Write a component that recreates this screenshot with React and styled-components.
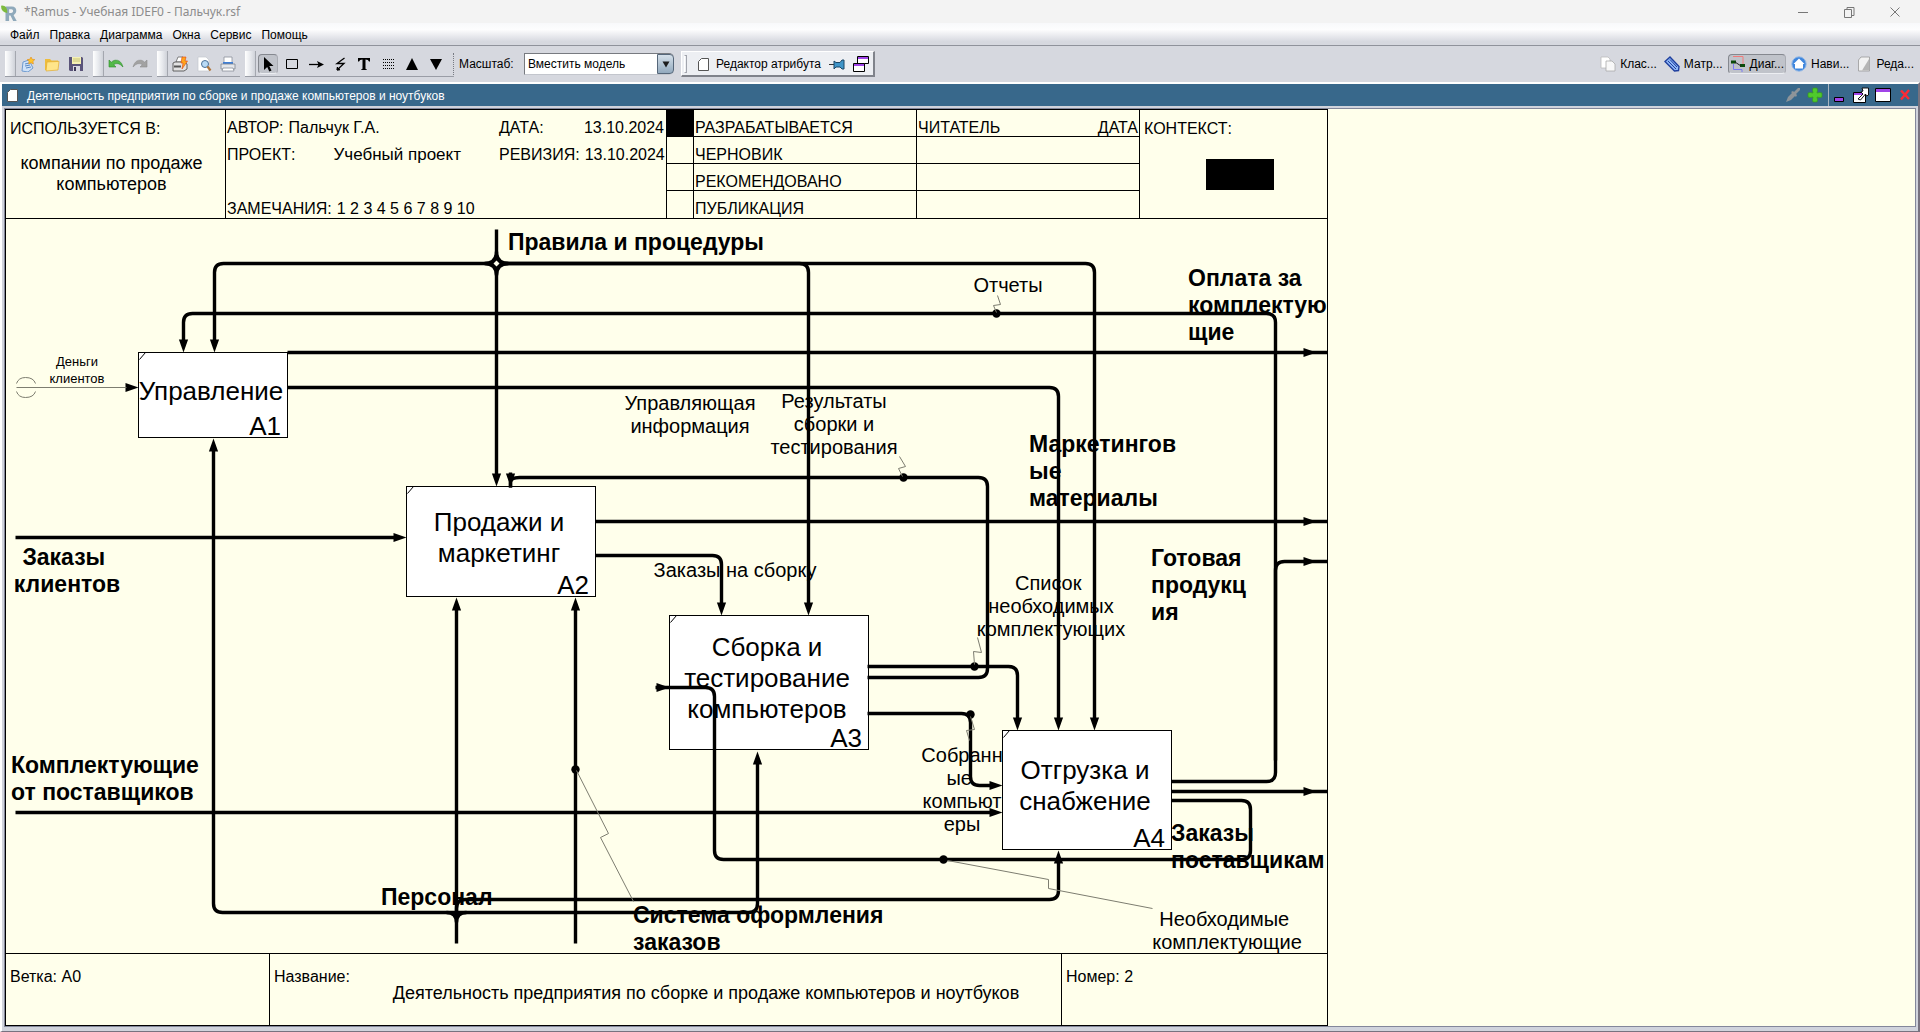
import React from "react";
import styled, { createGlobalStyle, css } from "styled-components";

const sans = '"Liberation Sans", Arial, sans-serif';

const GlobalStyle = createGlobalStyle`
  * { box-sizing: border-box; }
  body { margin: 0; background: #d6d8df; font-family: ${sans}; font-size: 12px; color: #000; }
  button { font: inherit; color: inherit; }
`;

/* ---------- window chrome ---------- */

const Window = styled.div`
  display: flex;
  flex-direction: column;
  height: 100vh;
  min-height: 600px;
  overflow: hidden;
`;

const TitleBar = styled.header`
  display: flex;
  align-items: center;
  height: 23px;
  padding: 0 2px 0 1px;
  background: #f3f3f3;
  color: #8c8c8c;
  flex: none;
`;

const WindowTitle = styled.h1`
  flex: 1;
  margin: 0 0 0 5px;
  font: 400 12px/16px "Noto Sans", "Open Sans", sans-serif;
`;

const CaptionButtons = styled.div`
  display: flex;
`;

const CaptionButton = styled.button`
  display: flex;
  align-items: center;
  justify-content: center;
  width: 46px;
  height: 20px;
  padding: 0;
  border: 0;
  background: none;
`;

const MenuBar = styled.nav`
  display: flex;
  align-items: center;
  gap: 10px;
  height: 23px;
  padding: 2px 0 0 10px;
  background: linear-gradient(#f8f9fb, #fdfdfe 30%, #d6d8df 85%);
  border-bottom: 1px solid #8f929b;
  flex: none;
`;

const MenuItem = styled.button`
  padding: 0;
  border: 0;
  background: none;
  line-height: 16px;
`;

const ToolBar = styled.div`
  display: flex;
  align-items: center;
  height: 36px;
  padding: 0 4px 0 5px;
  gap: 5px;
  background: #d6d8df;
  flex: none;
`;

const ToolGroup = styled.div`
  display: flex;
  align-items: center;
  height: 26px;
  border-bottom: 1px solid #9a9da6;
`;

const Grip = styled.span`
  width: 11px;
  height: 25px;
  border-right: 1px solid #a4a7af;
  background: linear-gradient(90deg, #fff, #e9ebef 50%, #cfd2d9);
`;

const ToolButton = styled.button`
  display: flex;
  align-items: center;
  justify-content: center;
  width: ${(p) => (p.$active ? 20 : 24)}px;
  height: 20px;
  margin: ${(p) => (p.$active ? "0 2px" : 0)};
  padding: 0;
  border: 1px solid transparent;
  border-radius: 4px;
  background: none;
  ${(p) =>
    p.$active &&
    css`
      border-color: #85888f #a9acb3 #eceef2 #85888f;
      background: #c0c3ca;
    `}
`;

const DottedRule = styled.span`
  height: 22px;
  margin-left: 5px;
  border-left: 1px dotted #777a82;
`;

const ScaleLabel = styled.label`
  width: 60px;
  line-height: 16px;
`;

const ComboBox = styled.span`
  display: flex;
  width: 150px;
  height: 22px;
  border: 1px solid #777a80;
  border-right: 0;
  border-bottom-color: #c3c6cd;
  border-radius: 0 5px 5px 0;
  background: #fff;
`;

const Select = styled.select`
  flex: 1;
  min-width: 0;
  padding: 0 0 0 3px;
  border: 0;
  appearance: none;
  background: transparent;
  font: 12px ${sans};
`;

const ComboArrow = styled.span`
  display: flex;
  align-items: center;
  justify-content: center;
  width: 17px;
  border: 1px solid #56677a;
  border-radius: 0 4px 4px 0;
  background: linear-gradient(#d5e0ea, #93aabe);
`;

const EditorPanel = styled.div`
  display: flex;
  align-items: center;
  gap: 8px;
  width: 194px;
  height: 26px;
  margin-left: 2px;
  padding-left: 2px;
  border: 1px solid #fff;
  border-right: 2px solid #80838b;
  border-bottom: 2px solid #80838b;
  background: #edeff3;
`;

const PanelGrip = styled.span`
  width: 3px;
  height: 18px;
  border: 1px solid #a2a5ad;
  border-left-color: #fff;
`;

const PlainButton = styled.button`
  display: flex;
  align-items: center;
  gap: 5px;
  padding: 0;
  border: 0;
  background: none;
  line-height: 16px;
  white-space: nowrap;
`;

const ViewTabs = styled.div`
  display: flex;
  align-items: center;
  align-self: stretch;
  gap: 3px;
  margin-left: auto;
`;

const ViewTab = styled(ToolButton)`
  width: auto;
  margin: 0;
  gap: 4px;
  padding: 0 1px;
`;

/* ---------- document frame ---------- */

const Frame = styled.main`
  display: flex;
  flex-direction: column;
  flex: 1;
  min-height: 0;
  border: 2px solid #fff;
  border-right-color: #77727f;
  border-bottom: 1px solid #77727f;
  background: #d0d3dc;
`;

const FrameTitle = styled.div`
  display: flex;
  align-items: center;
  gap: 2px;
  height: 22px;
  padding: 0 5px 0 2px;
  background: #38688b;
  color: #fff;
  flex: none;
`;

const FrameName = styled.h2`
  flex: 1;
  margin: 0 0 0 5px;
  padding-top: 1px;
  font: 400 12px/16px ${sans};
`;

const FrameTools = styled.div`
  display: flex;
  align-items: center;
  align-self: stretch;
  gap: 6px;
  padding-right: ${(p) => (p.$divided ? 5 : 0)}px;
  border-right: ${(p) => (p.$divided ? "1px solid #a8b4c0" : 0)};
`;

const FrameButton = styled.button`
  display: flex;
  padding: 0;
  border: 0;
  background: none;
`;

const Workspace = styled.section`
  flex: 1;
  min-height: 0;
  margin: 2px 2px 4px 2px;
  border: 1px solid #83879a;
  overflow: hidden;
  background: #ffffeb;
`;

const Sheet = styled.article`
  width: 1323px;
  border: 1px solid #000;
`;

const SheetHead = styled.div`
  display: grid;
  grid-template-columns: 220px 441px 27px 223px 223px 1fr;
  font-size: 16px;
  line-height: 18px;
  border-bottom: 1px solid #000;
`;

const HeadCell = styled.div`
  display: flex;
  flex-direction: column;
  padding: 10px 4px 0 4px;
  border-right: ${(p) => (p.$last ? 0 : "1px solid #000")};
`;

const UsedBy = styled.div`
  margin: 15px 8px 0 0;
  font-size: 18px;
  line-height: 21px;
  text-align: center;
  white-space: pre-line;
`;

const InfoGrid = styled.dl`
  display: grid;
  grid-template-columns: 272px 86px 1fr;
  grid-template-rows: repeat(4, 27px);
  align-items: end;
  margin: 0;
  padding: 0 2px 0 1px;
  border-right: 1px solid #000;
`;

const InfoField = styled.div`
  display: flex;
  grid-column: ${(p) => p.$span || "auto"};
  grid-row: ${(p) => p.$row};
  gap: ${(p) => p.$gap || 5}px;
  justify-content: ${(p) => (p.$spread ? "space-between" : "flex-start")};
  white-space: nowrap;
  dt, dd { margin: 0; }
`;

const ProjectName = styled.dd`
  font-size: 17px;
`;

const StatusColumn = styled.div`
  display: grid;
  grid-template-rows: repeat(4, 27px);
  line-height: 16px;
  border-right: 1px solid #000;
`;

const StatusCell = styled.div`
  display: flex;
  align-items: flex-end;
  justify-content: space-between;
  padding: 0 1px;
  border-bottom: 1px solid ${(p) => (p.$last ? "transparent" : "#000")};
  background: ${(p) => (p.$filled ? "#000" : "none")};
`;

const ContextBox = styled.div`
  width: 68px;
  height: 31px;
  margin: 21px 0 0 62px;
  background: #000;
`;

const Canvas = styled.div`
  position: relative;
  height: 734px;
`;

const ORIGIN = { x: 6, y: 219 };

const placed = css`
  position: absolute;
  left: ${(p) => p.$x - ORIGIN.x}px;
  top: ${(p) => p.$y - ORIGIN.y}px;
  width: ${(p) => p.$w}px;
`;

const ActivityBox = styled.div`
  ${placed}
  display: flex;
  align-items: center;
  justify-content: center;
  height: ${(p) => p.$h}px;
  padding: 0 4px 8px 0;
  border: 1px solid #000;
  background: #fff;
  font-size: 26px;
  line-height: 31px;
  text-align: center;
  white-space: pre;
`;

const ActivityCode = styled.span`
  position: absolute;
  right: 6px;
  bottom: -5px;
`;

const Wires = styled.svg`
  position: absolute;
  left: 0;
  top: 0;
  width: 100%;
  height: 100%;
`;

const labelKinds = {
  outer: css`font-size: 23px; line-height: 27px; font-weight: 700;`,
  inner: css`font-size: 20px; line-height: 23px;`,
  small: css`font-size: 13px; line-height: 17px;`,
};

const ArrowLabel = styled.div`
  ${placed}
  ${(p) => labelKinds[p.$kind]}
  text-align: ${(p) => (p.$center ? "center" : "left")};
  white-space: pre;
`;

const SheetFoot = styled.div`
  display: grid;
  grid-template-columns: 264px 792px 1fr;
  height: 72px;
  border-top: 1px solid #000;
  font-size: 16px;
  line-height: 18px;
`;

const FootCell = styled.div`
  display: flex;
  gap: 5px;
  padding: 14px 4px 0 4px;
  border-right: ${(p) => (p.$last ? 0 : "1px solid #000")};
`;

const SheetName = styled.div`
  flex: 1;
  padding-top: 16px;
  font-size: 18px;
  text-align: center;
`;

/* ---------- diagram data ---------- */

const boxes = [
  { x: 138, y: 352, w: 150, h: 86, code: "A1", text: "Управление" },
  { x: 406, y: 486, w: 190, h: 111, code: "A2", text: "Продажи и\nмаркетинг" },
  { x: 669, y: 615, w: 200, h: 135, code: "A3", text: "Сборка и\nтестирование\nкомпьютеров" },
  { x: 1002, y: 730, w: 170, h: 120, code: "A4", text: "Отгрузка и\nснабжение" },
];

const wires = [
  [[496, 229], [496, 478]],
  [[496, 263], [214, 263], [214, 343]],
  [[496, 263], [808, 263], [808, 606]],
  [[496, 263], [1094, 263], [1094, 720]],
  [[1171, 781], [1275, 781], [1275, 313], [183, 313], [183, 343]],
  [[287, 352], [1327, 352]],
  [[287, 387], [1058, 387], [1058, 720]],
  [[456, 912], [213, 912], [213, 446]],
  [[456, 912], [757, 912], [757, 760]],
  [[456, 943], [456, 605]],
  [[456, 918], [456, 899], [1058, 899], [1058, 860]],
  [[575, 943], [575, 605]],
  [[15, 537], [398, 537]],
  [[15, 812], [993, 812]],
  [[595, 521], [1327, 521]],
  [[595, 555], [721, 555], [721, 606]],
  [[867, 677], [987, 677], [987, 477], [510, 477], [510, 487]],
  [[867, 666], [1017, 666], [1017, 720]],
  [[867, 713], [970, 713], [970, 785], [993, 785]],
  [[1171, 791], [1327, 791]],
  [[1171, 800], [1250, 800], [1250, 859], [714, 859], [714, 687], [655, 687]],
  [[1275, 760], [1275, 561], [1327, 561]],
  [[510, 472], [510, 487]],
];

const arrows = [
  [496, 486, "d"], [214, 352, "d"], [183, 352, "d"], [808, 615, "d"], [1094, 730, "d"],
  [1058, 730, "d"], [721, 615, "d"], [1017, 730, "d"], [510, 486, "d"],
  [213, 438, "u"], [456, 597, "u"], [575, 597, "u"], [757, 751, "u"], [1058, 850, "u"],
  [138, 387, "r"], [406, 537, "r"], [1002, 785, "r"], [1002, 812, "r"], [669, 687, "r"],
  [1316, 352, "r"], [1316, 521, "r"], [1316, 561, "r"], [1316, 791, "r"],
];

const dots = [[996, 313], [903, 477], [974, 666], [970, 714], [943, 859], [575, 769]];

const leaders = [
  "997,295 1000,304 993,305 996,312",
  "899,456 905,466 898,468 902,476",
  "977,637 981,652 973,651 974,664",
  "970,716 974,729 966,730 969,740",
  "576,770 608,833 600,837 633,901",
  "947,860 1048,879 1048,888 1152,908",
];

const labels = [
  { x: 508, y: 229, w: 270, kind: "outer", text: "Правила и процедуры" },
  { x: 1188, y: 265, w: 140, kind: "outer", text: "Оплата за\nкомплектую\nщие" },
  { x: 1029, y: 431, w: 160, kind: "outer", text: "Маркетингов\nые\nматериалы" },
  { x: 1151, y: 545, w: 120, kind: "outer", text: "Готовая\nпродукц\nия" },
  { x: 12, y: 544, w: 110, kind: "outer", center: true, text: "Заказы \nклиентов" },
  { x: 11, y: 752, w: 200, kind: "outer", text: "Комплектующие\nот поставщиков" },
  { x: 381, y: 884, w: 130, kind: "outer", text: "Персонал" },
  { x: 633, y: 902, w: 270, kind: "outer", text: "Система оформления\nзаказов" },
  { x: 1171, y: 820, w: 157, kind: "outer", text: "Заказы\nпоставщикам" },
  { x: 968, y: 274, w: 80, kind: "inner", center: true, text: "Отчеты" },
  { x: 619, y: 392, w: 142, kind: "inner", center: true, text: "Управляющая\nинформация" },
  { x: 763, y: 390, w: 142, kind: "inner", center: true, text: "Результаты\nсборки и\nтестирования" },
  { x: 650, y: 559, w: 170, kind: "inner", center: true, text: "Заказы на сборку" },
  { x: 971, y: 572, w: 160, kind: "inner", center: true, text: "Список \nнеобходимых\nкомплектующих" },
  { x: 916, y: 744, w: 92, kind: "inner", center: true, text: "Собранн\nые \nкомпьют\nеры" },
  { x: 1147, y: 908, w: 160, kind: "inner", center: true, text: "Необходимые \nкомплектующие" },
  { x: 41, y: 353, w: 72, kind: "small", center: true, text: "Деньги\nклиентов" },
];

/* Turns a list of corner points into a path whose corners are rounded. */
function route(points, radius = 9) {
  const toward = (from, to, d) => {
    const dx = to[0] - from[0];
    const dy = to[1] - from[1];
    const len = Math.hypot(dx, dy) || 1;
    const k = Math.min(d, len / 2) / len;
    return [from[0] + dx * k, from[1] + dy * k];
  };
  return points
    .map((p, i) => {
      if (i === 0) return `M${p}`;
      if (i === points.length - 1) return `L${p}`;
      return `L${toward(p, points[i - 1], radius)}Q${p} ${toward(p, points[i + 1], radius)}`;
    })
    .join("");
}

const turn = { r: 0, d: 90, u: 270 };

function Diagram() {
  return (
    <Canvas>
      {boxes.map((b) => (
        <ActivityBox key={b.code} $x={b.x} $y={b.y} $w={b.w} $h={b.h}>
          {b.text}
          <ActivityCode>{b.code}</ActivityCode>
        </ActivityBox>
      ))}
      <Wires viewBox="6 219 1321 734" preserveAspectRatio="xMinYMin meet" aria-hidden="true">
        <g transform="translate(0.5 0.5)">
          <g fill="none" stroke="#000" strokeWidth="3.4">
            {wires.map((w, i) => <path key={i} d={route(w)} />)}
            <path d="M446 912Q456 912 456 922Q456 912 466 912" />
            <path d="M484 263Q496 263 496 275Q496 263 508 263Q496 263 496 251Q496 263 484 263" />
          </g>
          <path d="M496 258l5 5-5 5-5-5z" fill="#000" />
          <path d="M496 260l3 3-3 3-3-3z" fill="#ffffeb" />
          {arrows.map(([x, y, dir]) => (
            <path key={`${x}-${y}`} d="M0 0L-13-4.6V4.6Z" transform={`translate(${x} ${y}) rotate(${turn[dir]})`} />
          ))}
          {dots.map(([x, y]) => <circle key={x} cx={x} cy={y} r="4.2" />)}
          <g fill="none" stroke="#7d7d70" strokeWidth="1">
            {leaders.map((l) => <polyline key={l} points={l} />)}
            <path d="M16 387H126M16 383Q18 377 25 377Q33 377 35 383M16 391Q18 397 25 397Q33 397 35 391" />
          </g>
          <g stroke="#000">
            {boxes.map((b) => <path key={b.code} d={`M${b.x + 1} ${b.y + 7}l6-7`} />)}
          </g>
        </g>
      </Wires>
      {labels.map((l) => (
        <ArrowLabel key={l.text} $x={l.x} $y={l.y} $w={l.w} $kind={l.kind} $center={l.center}>
          {l.text}
        </ArrowLabel>
      ))}
    </Canvas>
  );
}

/* ---------- icons ---------- */

const glyphs = {
  logo: (
    <>
      <path d="M5 4h7q5 0 5 5 0 3-3 4.500l3.500 6.500h-4l-3-6h-1.500v6H5z" fill="#8fa9bb" />
      <path d="M9 7h2.500q2 0 2 2t-2 2H9z" fill="#f3f3f3" />
      <path d="M0 3q7-1 7 8Q0 10 0 3z" fill="#7cba3d" />
    </>
  ),
  newDoc: (
    <>
      <path d="M3 6l6-2 4 8-5 4-6-1z" fill="#cfe2f8" stroke="#6f9bd0" />
      <path d="M5 8l4-1M5 10l5-1M6 12l5-1" stroke="#5b8ac4" />
      <path d="M11 1l1.200 2.300 2.600.3-1.900 1.800.5 2.500L11 6.700 8.700 7.900l.4-2.500-1.900-1.800 2.600-.3z" fill="#ffc52b" stroke="#e08a1a" strokeWidth=".6" />
    </>
  ),
  folder: (
    <>
      <path d="M1 3h5l1.500 1.500H14V14H1z" fill="#eebd3c" />
      <path d="M3 6l12-.6-1 8.600-12 1z" fill="#ffe58a" stroke="#e2ad30" strokeWidth=".7" />
    </>
  ),
  save: (
    <>
      <path d="M1 1h13l1 1v13H2l-1-1z" fill="#5a5479" />
      <path d="M4 1h9v7H4z" fill="#f5f1b4" />
      <path d="M5 3h7M5 5h7" stroke="#c8c276" />
      <path d="M5 10h7v5H5z" fill="#d8d8e2" />
      <path d="M6 11h2v4H6z" fill="#3d3858" />
    </>
  ),
  undo: <path d="M1 4v7h7L5.600 8.700Q10 5.500 15 11 13 3.500 7 4.200 5 4.500 3.300 6.200z" fill="#52b947" stroke="#2d8a2a" strokeWidth=".6" />,
  redo: <path d="M15 4v7H8l2.400-2.300Q6 5.500 1 11 3 3.500 9 4.200q2 .3 3.700 2z" fill="#a2a2a2" stroke="#8d8d8d" strokeWidth=".6" />,
  quickPrint: (
    <>
      <path d="M4 6l2-5h5l-1 5z" fill="#fff" stroke="#666" strokeWidth=".8" />
      <path d="M1 7l2-1h9l3 2v5l-3 2H1z" fill="#e2e2e2" stroke="#555" strokeWidth=".9" />
      <path d="M2 9.500h7v2H2z" fill="#555" />
      <path d="M10 1h4l-1 4h2.500L10 13l1-6H9z" fill="#ffa61c" stroke="#e04413" strokeWidth=".6" />
    </>
  ),
  preview: (
    <>
      <path d="M2 1h8l3 3v11H2z" fill="#fff" stroke="#c4c8ce" strokeWidth=".7" />
      <circle cx="9" cy="8" r="3.500" fill="#b9daf5" stroke="#4a6f96" />
      <path d="M11.500 10.500l3 4" stroke="#b0753a" strokeWidth="2.200" />
    </>
  ),
  print: (
    <>
      <path d="M4 1h8v6H4z" fill="#fff" stroke="#8a9099" strokeWidth=".8" />
      <path d="M3 6h10v3H3z" fill="#3f7fd6" />
      <path d="M1 8h14v5H1z" fill="#e4e6ea" stroke="#7f858f" strokeWidth=".8" />
      <path d="M3 12h10l1 3H2z" fill="#fff" stroke="#8a9099" strokeWidth=".8" />
    </>
  ),
  pointer: <path d="M4 1l9.500 9H9.300l2.200 4.500-2.200 1L7.200 11 4 14z" fill="#000" />,
  box: <path d="M2.500 3.500h11v9h-11z" fill="none" stroke="#000" />,
  arrow: (
    <>
      <path d="M1 8.500h12" stroke="#000" strokeWidth="1.300" />
      <path d="M16 8.500L9 5l1.500 3.500L9 12z" fill="#000" />
    </>
  ),
  bolt: <path d="M12.500 2L5 7.500h7L5 14M5 14l.5-3M5 14l3-.5" fill="none" stroke="#000" strokeWidth="1.300" />,
  text: <path d="M2 2h12v3.500h-1Q12.500 3.500 9.500 3.500v9q0 1 1.500 1V14H5v-.5q1.500 0 1.500-1v-9Q3.500 3.500 3 5.500H2z" fill="#000" />,
  dots: <path d="M3 3.500h11M3 6.500h11M3 9.500h11M3 12.500h11" stroke="#000" strokeDasharray="1 1" shapeRendering="crispEdges" />,
  up: <path d="M8 2l6 12H2z" fill="#000" />,
  down: <path d="M8 14L2 3h12z" fill="#000" />,
  page: <path d="M6.500 2.500h7v12h-10v-9z" fill="#fff" stroke="#555" />,
  pin: (
    <>
      <path d="M0 8.500h6" stroke="#333" />
      <path d="M5 5l2 1.500h4L13 4h2v9h-2l-2-2H7L5 13z" fill="#3f95c9" stroke="#1b4666" />
    </>
  ),
  windows: (
    <>
      <path d="M4.500 .5h11v7h-11z" fill="#fff" stroke="#000" />
      <path d="M5 1h10v2H5z" fill="#a044e8" />
      <path d="M.5 7.500h11v8H.5z" fill="#fff" stroke="#000" />
      <path d="M1 8h10v2H1z" fill="#a044e8" />
    </>
  ),
  copies: (
    <>
      <path d="M1 1h7l2 2v9H1z" fill="#fff" stroke="#bbb" strokeWidth=".8" />
      <path d="M6 5h6l3 3v7H6z" fill="#f8f8f8" stroke="#aaa" strokeWidth=".8" />
    </>
  ),
  clip: (
    <>
      <path d="M1 5.500L6 1l9 9.500-.5 4-4 .5z" fill="#8db4f4" stroke="#1f3f9e" strokeWidth="1.400" />
      <path d="M4 5l8 8M6 3.500l7 7.500" stroke="#1f3f9e" />
    </>
  ),
  flow: (
    <>
      <path d="M3 .5h10V8" fill="none" stroke="#f27b7b" />
      <path d="M3.500 8v5.500H12V16" fill="none" stroke="#7b7bf2" />
      <path d="M1 6h5M10 9.500h5" stroke="#0a4a0a" strokeWidth="3" />
      <path d="M5 6l6 4" stroke="#222" />
    </>
  ),
  compass: (
    <>
      <circle cx="8" cy="8" r="7.200" fill="#3f86dd" stroke="#94b9e6" />
      <path d="M8 2.500l5.500 5.500h-1.500v4.500H4V8H2.500z" fill="#fff" />
    </>
  ),
  greyPage: (
    <>
      <path d="M5 1h8.500v14h-11V4z" fill="#f2f2f2" stroke="#999" strokeWidth=".8" />
      <path d="M13 3v11.500H6z" fill="#b5b5b5" />
    </>
  ),
  dropper: <path d="M1 15l2-5 4-4-1-1 2-1 1 1 4-4h2v2l-4 4 1 1-1 2-1-1-4 4z" fill="#8d9499" />,
  plus: <path d="M6 1h4q1 2 0 5 3-1 5 0v4q-2 1-5 0 1 3 0 5H6q-1-2 0-5-3 1-5 0V6q2-1 5 0-1-3 0-5z" fill="#4fc92c" stroke="#37961f" strokeWidth=".7" />,
  minimize: <path d="M3.500 10.500h9v4h-9z" fill="#a044e8" stroke="#000" />,
  detach: (
    <>
      <path d="M.5 5.500h12v10H.5z" fill="#fff" stroke="#000" />
      <path d="M1 6h11v2H1z" fill="#a044e8" />
      <path d="M5 12l5-5-2-2 2-1-1-3h6.500v7l-2 1-1-2-5 6z" fill="#fff" stroke="#000" strokeWidth=".9" />
    </>
  ),
  maximize: (
    <>
      <path d="M.5 1.500h15v13H.5z" fill="#fff" stroke="#000" />
      <path d="M1 2h14v3H1z" fill="#a044e8" />
    </>
  ),
  close: <path d="M4 3.500l8 8.500M12 3L4 12.500" stroke="#ff2a34" strokeWidth="2.400" />,
  capMin: <path d="M3 8.500h10" stroke="#777" />,
  capRestore: <path d="M3.500 5.500h7v8h-7zM6 5.500V3.500h7v8h-2.500" fill="none" stroke="#777" />,
  capClose: <path d="M3.500 3.500l9 9M12.500 3.500l-9 9" stroke="#777" />,
  caret: <path d="M4 5h8l-4 7z" fill="#1d1d1d" />,
};

const Glyph = styled.svg`
  display: block;
  flex: none;
  width: ${(p) => p.$size}px;
  height: ${(p) => p.$size}px;
`;

function Icon({ name, size = 16 }) {
  const box = name === "logo" ? 20 : 16;
  return (
    <Glyph $size={size} viewBox={`0 0 ${box} ${box}`} fill="none" aria-hidden="true">
      {glyphs[name]}
    </Glyph>
  );
}

const toolGroups = [
  [["newDoc", "Создать"], ["folder", "Открыть"], ["save", "Сохранить"]],
  [["undo", "Отменить"], ["redo", "Повторить"]],
  [["quickPrint", "Быстрая печать"], ["preview", "Просмотр"], ["print", "Печать"]],
];

const drawTools = [
  ["pointer", "Курсор"], ["box", "Блок"], ["arrow", "Стрелка"], ["bolt", "Тильда"],
  ["text", "Текст"], ["dots", "Сетка"], ["up", "Вверх"], ["down", "Вниз"],
];

const views = [
  ["copies", "Клас..."], ["clip", "Матр..."], ["flow", "Диаг..."], ["compass", "Нави..."], ["greyPage", "Реда..."],
];

const statuses = ["РАЗРАБАТЫВАЕТСЯ", "ЧЕРНОВИК", "РЕКОМЕНДОВАНО", "ПУБЛИКАЦИЯ"];

const diagramName = "Деятельность предприятия по сборке и продаже компьютеров и ноутбуков";

export default function App() {
  return (
    <Window>
      <GlobalStyle />
      <TitleBar>
        <Icon name="logo" size={18} />
        <WindowTitle>*Ramus - Учебная IDEF0 - Пальчук.rsf</WindowTitle>
        <CaptionButtons>
          <CaptionButton aria-label="Свернуть"><Icon name="capMin" /></CaptionButton>
          <CaptionButton aria-label="Восстановить"><Icon name="capRestore" /></CaptionButton>
          <CaptionButton aria-label="Закрыть"><Icon name="capClose" /></CaptionButton>
        </CaptionButtons>
      </TitleBar>

      <MenuBar>
        {["Файл", "Правка", "Диаграмма", "Окна", "Сервис", "Помощь"].map((m) => (
          <MenuItem key={m}>{m}</MenuItem>
        ))}
      </MenuBar>

      <ToolBar>
        {toolGroups.map((group, i) => (
          <ToolGroup key={i}>
            <Grip />
            {group.map(([icon, name]) => (
              <ToolButton key={icon} aria-label={name}><Icon name={icon} /></ToolButton>
            ))}
          </ToolGroup>
        ))}
        <ToolGroup>
          <Grip />
          {drawTools.map(([icon, name]) => (
            <ToolButton key={icon} aria-label={name} $active={icon === "pointer"}><Icon name={icon} /></ToolButton>
          ))}
          <DottedRule />
        </ToolGroup>
        <ScaleLabel htmlFor="scale">Масштаб:</ScaleLabel>
        <ComboBox>
          <Select id="scale" defaultValue="fit">
            <option value="fit">Вместить модель</option>
          </Select>
          <ComboArrow><Icon name="caret" size={14} /></ComboArrow>
        </ComboBox>
        <EditorPanel>
          <PanelGrip />
          <PlainButton><Icon name="page" />Редактор атрибута</PlainButton>
          <PlainButton aria-label="Закрепить"><Icon name="pin" /></PlainButton>
          <PlainButton aria-label="Окна"><Icon name="windows" /></PlainButton>
        </EditorPanel>
        <ViewTabs>
          {views.map(([icon, name]) => (
            <ViewTab key={icon} $active={icon === "flow"}><Icon name={icon} />{name}</ViewTab>
          ))}
        </ViewTabs>
      </ToolBar>

      <Frame>
        <FrameTitle>
          <Icon name="page" />
          <FrameName>{diagramName}</FrameName>
          <FrameTools $divided>
            <FrameButton aria-label="Пипетка"><Icon name="dropper" /></FrameButton>
            <FrameButton aria-label="Добавить"><Icon name="plus" /></FrameButton>
          </FrameTools>
          <FrameTools>
            <FrameButton aria-label="Свернуть окно"><Icon name="minimize" /></FrameButton>
            <FrameButton aria-label="Открепить окно"><Icon name="detach" /></FrameButton>
            <FrameButton aria-label="Развернуть окно"><Icon name="maximize" /></FrameButton>
            <FrameButton aria-label="Закрыть окно"><Icon name="close" /></FrameButton>
          </FrameTools>
        </FrameTitle>

        <Workspace>
          <Sheet>
            <SheetHead>
              <HeadCell>
                ИСПОЛЬЗУЕТСЯ В:
                <UsedBy>{"компании по продаже\nкомпьютеров"}</UsedBy>
              </HeadCell>
              <InfoGrid>
                <InfoField $row={1}><dt>АВТОР:</dt><dd>Пальчук Г.А.</dd></InfoField>
                <InfoField $row={1} $span="2 / 4" $spread><dt>ДАТА:</dt><dd>13.10.2024</dd></InfoField>
                <InfoField $row={2} $gap={38}><dt>ПРОЕКТ:</dt><ProjectName>Учебный проект</ProjectName></InfoField>
                <InfoField $row={2} $span="2 / 4" $spread><dt>РЕВИЗИЯ:</dt><dd>13.10.2024</dd></InfoField>
                <InfoField $row={4}><dt>ЗАМЕЧАНИЯ:</dt><dd>1 2 3 4 5 6 7 8 9 10</dd></InfoField>
              </InfoGrid>
              <StatusColumn>
                {statuses.map((s, i) => <StatusCell key={s} $filled={i === 0} $last={i === 3} />)}
              </StatusColumn>
              <StatusColumn>
                {statuses.map((s, i) => <StatusCell key={s} $last={i === 3}>{s}</StatusCell>)}
              </StatusColumn>
              <StatusColumn>
                <StatusCell><span>ЧИТАТЕЛЬ</span><span>ДАТА</span></StatusCell>
                <StatusCell />
                <StatusCell />
                <StatusCell $last />
              </StatusColumn>
              <HeadCell $last>
                КОНТЕКСТ:
                <ContextBox />
              </HeadCell>
            </SheetHead>

            <Diagram />

            <SheetFoot>
              <FootCell>Ветка: A0</FootCell>
              <FootCell>
                Название:
                <SheetName>{diagramName}</SheetName>
              </FootCell>
              <FootCell $last>Номер: 2</FootCell>
            </SheetFoot>
          </Sheet>
        </Workspace>
      </Frame>
    </Window>
  );
}
